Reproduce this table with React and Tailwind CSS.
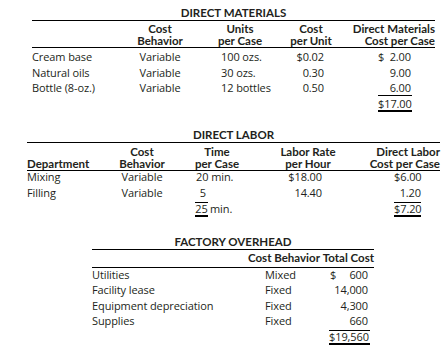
import React from "react";

const S1 = "grid grid-cols-[98px_60px_100px_42px_103px]";
const S2 = "grid grid-cols-[85px_60px_90px_92px_86px]";
const S3 = "grid grid-cols-[156px_74px_52px]";

// bold headings use a narrower face than the body text
const HEAD = "font-['Lato',sans-serif] font-bold text-[11.5px] tracking-normal";

const materials = [
  { name: "Cream base", units: "100 ozs.", cost: "$0.02", dollar: true, total: "2.00" },
  { name: "Natural oils", units: "30 ozs.", cost: "0.30", total: "9.00" },
  { name: "Bottle (8-oz.)", units: "12 bottles", cost: "0.50", total: "6.00" },
];

const overhead = [
  { name: "Utilities", behavior: "Mixed", cost: "600", dollar: true },
  { name: "Facility lease", behavior: "Fixed", cost: "14,000" },
  { name: "Equipment depreciation", behavior: "Fixed", cost: "4,300" },
  { name: "Supplies", behavior: "Fixed", cost: "660" },
];

const App = () => {
  return (
    <div className="w-[447px] h-[358px] overflow-hidden bg-white text-[#231f20] font-['Open_Sans',sans-serif] text-[11px] tracking-[-0.1px] whitespace-nowrap">
      {/* Direct materials */}
      <section className="ml-[32px] w-[403px] pt-[6px]">
        <h2 className={`${HEAD} text-center leading-[14px]`}>DIRECT MATERIALS</h2>
        <div className={`${S1} ${HEAD} border-t border-b border-black pt-[2px] leading-[12px]`}>
          <div />
          <div className="text-center">Cost<br />Behavior</div>
          <div className="text-center">Units<br />per Case</div>
          <div className="text-center">Cost<br />per Unit</div>
          <div className="text-right">Direct Materials<br />Cost per Case</div>
        </div>
        <div className="pt-[3px] leading-[12px]">
          {materials.map((m, i) => (
            <div key={m.name} className={`${S1} ${i === 2 ? "h-[14px]" : "h-[15.5px]"}`}>
              <div>{m.name}</div>
              <div className="text-center">Variable</div>
              <div className="pl-[31px]">{m.units}</div>
              <div className="text-right pr-[8px]">{m.cost}</div>
              <div className="flex justify-end pr-[23px]">
                <div className={`w-[34px] flex justify-between pr-[1px] ${i === 2 ? "border-b border-black" : ""}`}>
                  <span>{m.dollar ? "$" : ""}</span>
                  <span>{m.total}</span>
                </div>
              </div>
            </div>
          ))}
          <div className={`${S1} pt-[1.5px] pb-[0.5px]`}>
            <div />
            <div />
            <div />
            <div />
            <div className="flex justify-end pr-[23px]">
              <div className="w-[34px] h-[14px] text-right pr-[1px] border-b-2 border-black">$17.00</div>
            </div>
          </div>
        </div>
      </section>

      {/* Direct labor */}
      <section className="ml-[27px] w-[413px] mt-[16px]">
        <h2 className={`${HEAD} text-center leading-[14px]`}>DIRECT LABOR</h2>
        <div className={`${S2} ${HEAD} border-t border-b border-black pt-[2.5px] leading-[12px]`}>
          <div className="flex items-end">Department</div>
          <div className="text-center">Cost<br />Behavior</div>
          <div className="text-center">Time<br />per Case</div>
          <div className="text-center">Labor Rate<br />per Hour</div>
          <div className="text-right">Direct Labor<br />Cost per Case</div>
        </div>
        <div className="leading-[12px]">
          <div className={`${S2} h-[16px]`}>
            <div>Mixing</div>
            <div className="text-center">Variable</div>
            <div className="pl-[24px]">20 min.</div>
            <div className="text-right pr-[32px]">$18.00</div>
            <div className="flex justify-end pr-[19px]">
              <div className="w-[27px] text-right">$6.00</div>
            </div>
          </div>
          <div className={`${S2} h-[16px]`}>
            <div>Filling</div>
            <div className="text-center">Variable</div>
            <div className="flex pl-[23px]">
              <div className="w-[13px] text-right pr-[2px] border-b border-black">5</div>
            </div>
            <div className="text-right pr-[32px]">14.40</div>
            <div className="flex justify-end pr-[19px]">
              <div className="w-[27px] text-right border-b border-black">1.20</div>
            </div>
          </div>
          <div className={`${S2} h-[16px]`}>
            <div />
            <div />
            <div className="flex pl-[23px]">
              <div className="w-[13px] h-[14px] text-center border-b-2 border-black">25</div>
              <span className="ml-[2px]">min.</span>
            </div>
            <div />
            <div className="flex justify-end pr-[19px]">
              <div className="w-[27px] h-[14px] text-right border-b-2 border-black">$7.20</div>
            </div>
          </div>
        </div>
      </section>

      {/* Factory overhead */}
      <section className="ml-[92px] w-[282px] mt-[15.5px]">
        <h2 className={`${HEAD} text-center leading-[15px]`}>FACTORY OVERHEAD</h2>
        <div className={`${S3} ${HEAD} border-t border-b border-black pt-[1.5px] pb-[3px] leading-[12px]`}>
          <div />
          <div>Cost Behavior</div>
          <div className="text-right">Total Cost</div>
        </div>
        <div className="pt-[1px] leading-[12px]">
          {overhead.map((o, i) => (
            <div key={o.name} className={`${S3} h-[15.5px]`}>
              <div>{o.name}</div>
              <div className="pl-[17px]">{o.behavior}</div>
              <div className="flex justify-end pr-[4px]">
                <div className={`w-[41px] flex justify-between pl-[1px] pr-[2px] ${i === 3 ? "border-b border-black" : ""}`}>
                  <span>{o.dollar ? "$" : ""}</span>
                  <span>{o.cost}</span>
                </div>
              </div>
            </div>
          ))}
          <div className={`${S3} pt-[0.5px]`}>
            <div />
            <div />
            <div className="flex justify-end pr-[4px]">
              <div className="w-[41px] h-[14px] text-right pr-[2px] border-b-2 border-black">$19,560</div>
            </div>
          </div>
        </div>
      </section>
    </div>
  );
};

export default App;
